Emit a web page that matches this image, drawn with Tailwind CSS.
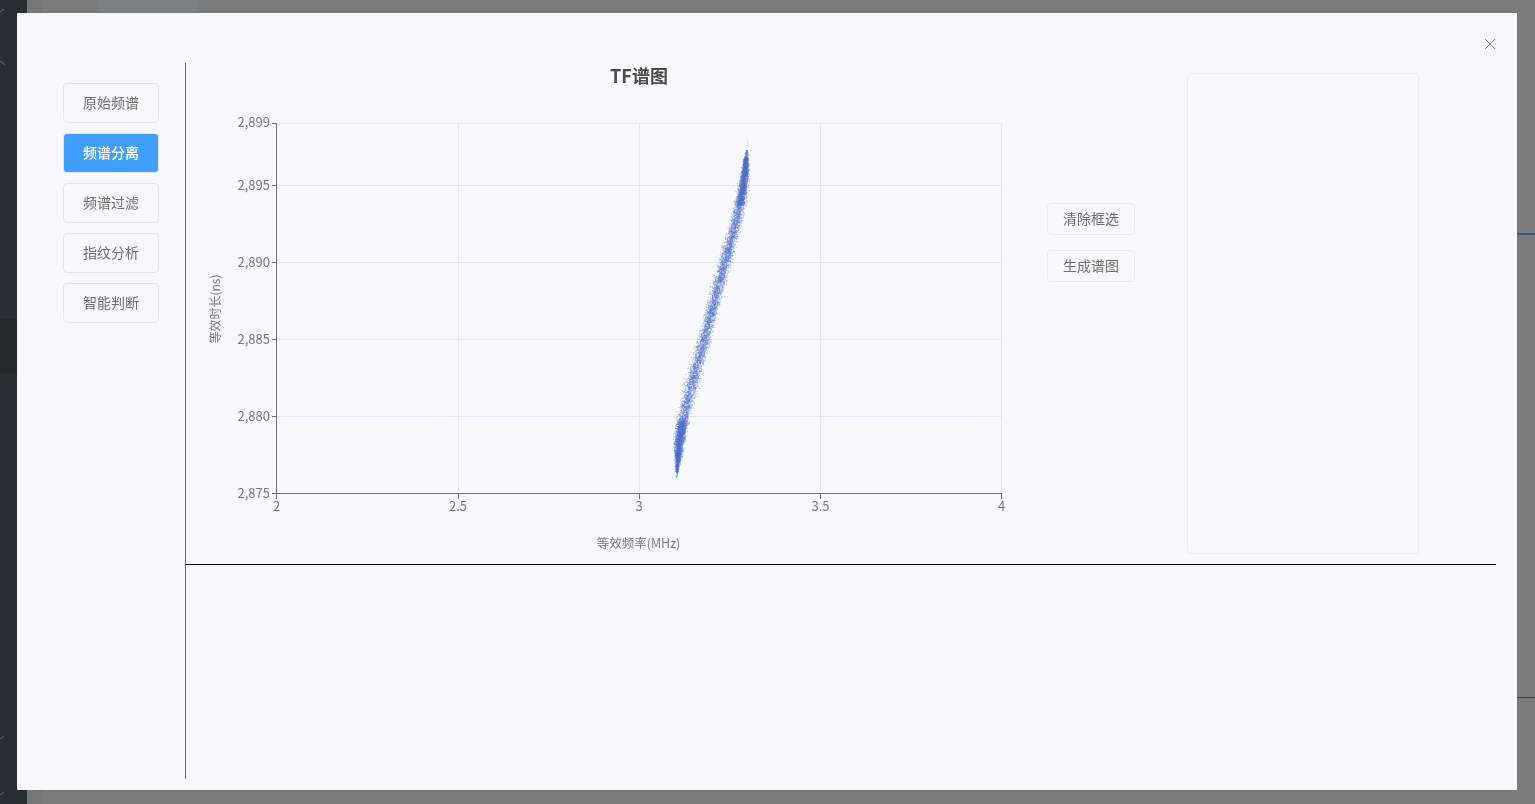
<!DOCTYPE html>
<html lang="zh">
<head>
<meta charset="utf-8">
<title>TF谱图</title>
<script src="https://cdn.jsdelivr.net/npm/@tailwindcss/browser@4"></script>
</head>
<body class="m-0 overflow-hidden">
<div class="relative w-[1535px] h-[804px] overflow-hidden bg-[#7b7b7b] font-['Noto_Sans_CJK_SC','Noto_Sans',sans-serif]">
  <!-- dimmed page behind the dialog -->
  <div class="absolute left-0 top-0 w-[27px] h-full bg-[#2a2d33]"></div>
  <div class="absolute left-0 top-[318px] w-[17px] h-[55px] bg-[#24272c]"></div>
  <div class="absolute left-[27px] top-0 w-[16px] h-full bg-[#767676]"></div>
  <div class="absolute left-[99px] top-0 w-[99px] h-[13px] bg-[#7b8085] rounded-b-md"></div>
  <div class="absolute left-[1517px] top-[233px] w-[18px] h-[2px] bg-[#2a5f8a]"></div>
  <div class="absolute left-[1517px] top-[697px] w-[18px] h-px bg-[#3f3f3f]"></div>
  <svg class="absolute left-0 top-0" width="17" height="804" fill="none" stroke="#6b6e73" stroke-width="1">
    <path d="M0 12l4-3M0 61l3 2 2 2M0 739l4-3M0 795l4-3"/>
  </svg>

  <!-- dialog -->
  <div class="absolute left-[17px] top-[13px] w-[1500px] h-[777px] bg-[#f8f8fb] flex pl-[46px] pt-[50px] rounded-[1px] [will-change:transform]">
    <svg class="absolute left-[1467px] top-[25px]" width="12" height="12" fill="none" stroke="#8a8a8f" stroke-width="1"><path d="M1 1l10 10M11 1L1 11"/></svg>

    <nav class="w-24 mr-[26px] mt-5 flex flex-col gap-[10px] text-sm">
      <div class="h-10 pb-[2px] flex items-center justify-center rounded border border-[#e4e5ec] text-[#6e6e6e]">原始频谱</div>
      <div class="h-10 pb-[2px] flex items-center justify-center rounded border border-[#e4e5ec] bg-[#409eff] text-white font-medium">频谱分离</div>
      <div class="h-10 pb-[2px] flex items-center justify-center rounded border border-[#e4e5ec] text-[#6e6e6e]">频谱过滤</div>
      <div class="h-10 pb-[2px] flex items-center justify-center rounded border border-[#e4e5ec] text-[#6e6e6e]">指纹分析</div>
      <div class="h-10 pb-[2px] flex items-center justify-center rounded border border-[#e4e5ec] text-[#6e6e6e]">智能判断</div>
    </nav>

    <main class="w-[1311px] h-[716px] border-l border-[#666]">
      <section class="h-[502px] border-b border-black flex">
        <!-- chart: origin (186,63) -->
        <div class="relative w-[861px] h-full shrink-0">
          <svg class="absolute left-0 top-0" width="861" height="501" font-size="12" fill="#77787f">
            <g stroke="#e3e6f3" stroke-width="1" fill="none">
              <path d="M91 60.5H815M91 122.5H815M91 199.5H815M91 276.5H815M91 353.5H815"/>
              <path d="M272.5 60V430M453.5 60V430M634.5 60V430M815.5 60V430"/>
            </g>
            <g stroke="#6e7079" stroke-width="1" fill="none">
              <path d="M90.5 60V431M90 430.5H816"/>
              <path d="M86 60.5H91M86 122.5H91M86 199.5H91M86 276.5H91M86 353.5H91M86 430.5H91"/>
              <path d="M90.5 431V436M272.5 431V436M453.5 431V436M634.5 431V436M815.5 431V436"/>
            </g>
            <g text-anchor="end" font-size="13">
              <text x="84" y="63.5">2,899</text>
              <text x="84" y="126.5">2,895</text>
              <text x="84" y="203.5">2,890</text>
              <text x="84" y="280.5">2,885</text>
              <text x="84" y="357.5">2,880</text>
              <text x="84" y="434.5">2,875</text>
            </g>
            <g text-anchor="middle">
              <g font-size="13">
                <text x="90.5" y="448">2</text>
                <text x="272" y="448">2.5</text>
                <text x="453" y="448">3</text>
                <text x="634.5" y="448">3.5</text>
                <text x="815.5" y="448">4</text>
              </g>
              <text x="452.5" y="485" font-size="12.5">等效频率(MHz)</text>
              <text transform="translate(34 246) rotate(-90)">等效时长(ns)</text>
              <text x="453" y="20" font-size="18" font-weight="700" fill="#4a4a4a">TF谱图</text>
            </g>
          </svg>
          <canvas id="scatter" width="861" height="501" class="absolute left-0 top-0"></canvas>
        </div>

        <div class="w-[88px] shrink-0 mt-[140px] flex flex-col gap-[15px] text-sm text-[#6e6e6e]">
          <div class="h-8 pb-[2px] flex items-center justify-center rounded border border-[#e9eaf0]">清除框选</div>
          <div class="h-8 pb-[2px] flex items-center justify-center rounded border border-[#e9eaf0]">生成谱图</div>
        </div>

        <div class="ml-[52px] mt-[10px] w-[232px] h-[481px] rounded border border-[#ebecf2]"></div>
      </section>
    </main>
  </div>
</div>
<script>
  var ctx = document.getElementById('scatter').getContext('2d');
  var seed = 12345;
  function rnd() { seed = (seed * 16807) % 2147483647; return (seed - 1) / 2147483646; }
  function gauss() { return (rnd() + rnd() + rnd() + rnd() - 2) / 0.58; }
  // [page y, page x of centre, standard deviation]
  var pts = [[477,676.3,0.4],[465,677,1],[445,678.6,2.2],[422,682,2.7],[400,687.5,2.9],[380,692.5,3],[340,703.5,3],[300,714,3],[262,724.5,2.9],[220,736,2.8],[195,741.5,2.3],[175,744.2,1.8],[160,745.6,1.2],[150,746.5,.5]];
  function at(y) {
    for (var i = 0; i < pts.length - 1; i++) {
      if (y <= pts[i][0] && y >= pts[i + 1][0]) {
        var t = (pts[i][0] - y) / (pts[i][0] - pts[i + 1][0]);
        return [pts[i][1] + t * (pts[i + 1][1] - pts[i][1]), pts[i][2] + t * (pts[i + 1][2] - pts[i][2])];
      }
    }
    return pts[0];
  }
  function dot(y) {
    var c = at(y), x = c[0] + gauss() * c[1];
    ctx.fillRect(x - 186, y - 63, 1, 1);
  }
  ctx.fillStyle = 'rgba(80,112,201,0.45)';
  var i;
  // Thin the ends of the ribbon so that the tips taper as in the reference.
  for (i = 0; i < 6800; i++) dot(156 + rnd() * 316);
  for (i = 0; i < 60; i++) dot(150 + rnd() * 6);
  for (i = 0; i < 30; i++) dot(470 + rnd() * 7);
  for (i = 0; i < 1300; i++) dot(420 + rnd() * 42);
  for (i = 0; i < 1300; i++) dot(158 + rnd() * 47);
  ctx.fillStyle = 'rgba(80,112,201,0.3)';
  for (i = 0; i < 5; i++) ctx.fillRect(746.5 - 186 + rnd(), 139 + i * 2 - 63, 1, 1);
</script>
</body>
</html>
